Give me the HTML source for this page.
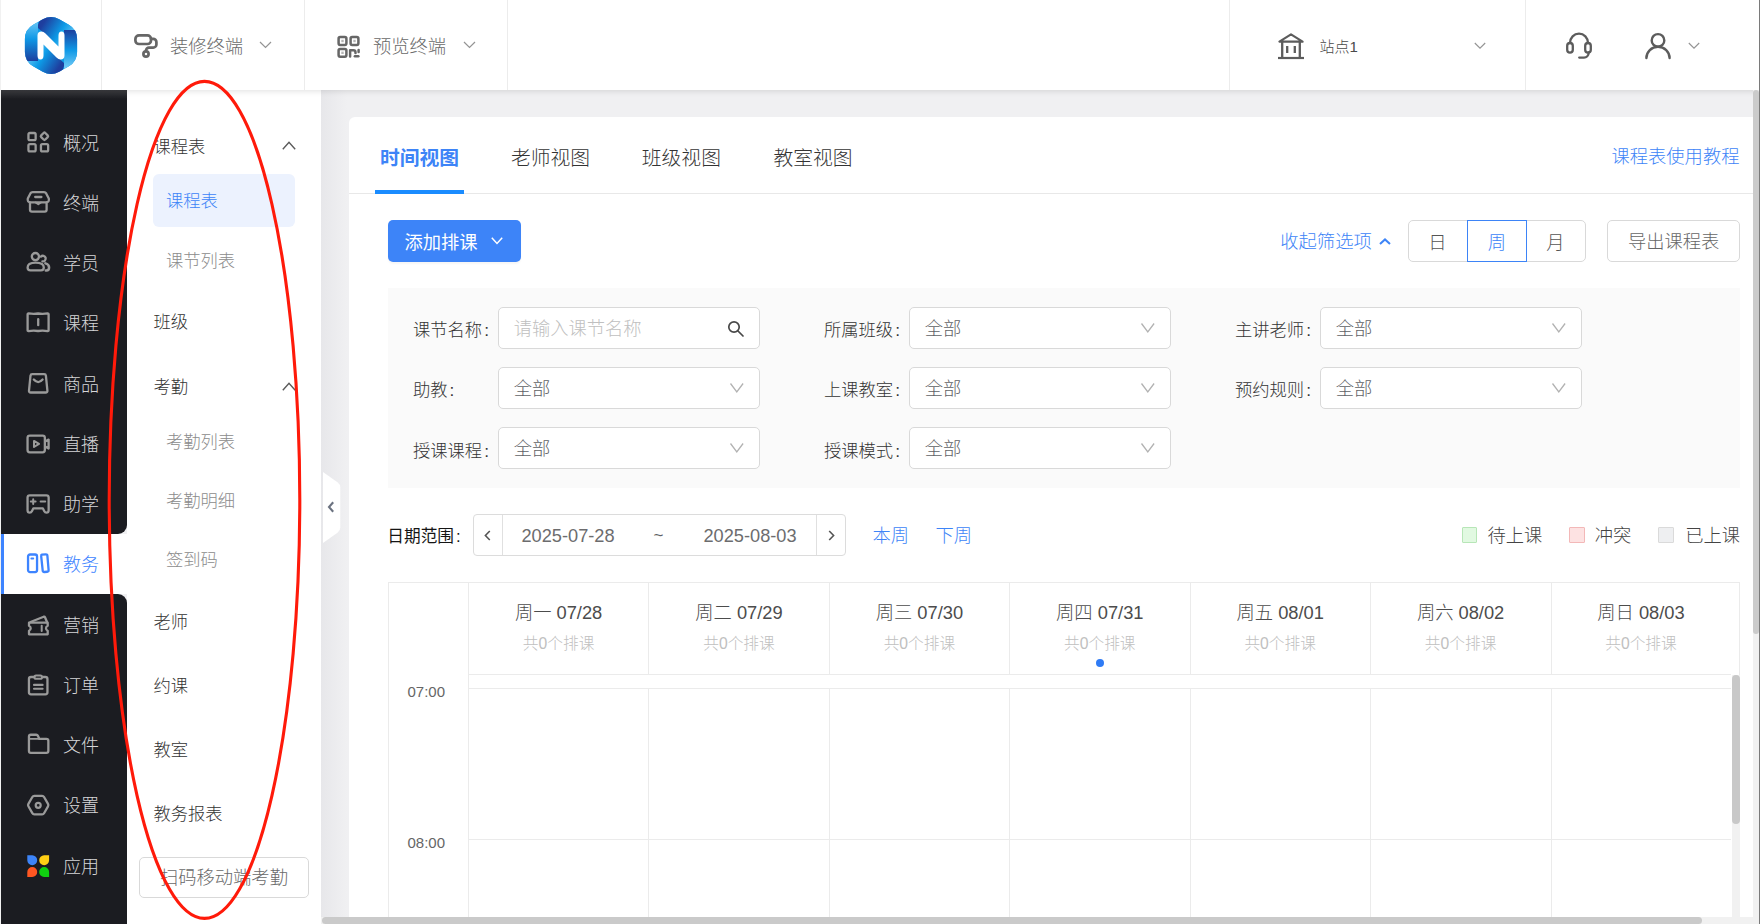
<!DOCTYPE html>
<html lang="zh-CN">
<head>
<meta charset="utf-8">
<title>课程表</title>
<style>
*{box-sizing:border-box;margin:0;padding:0}
html,body{width:1760px;height:924px;overflow:hidden;background:#f0f0f2}
body{font-family:"Liberation Sans","Noto Sans CJK SC",sans-serif;font-size:17.5px;font-weight:300;color:#333;position:relative}
.abs{position:absolute}
svg{display:block;overflow:visible}
/* header */
#hdr{position:absolute;left:0;top:0;width:1760px;height:90px;background:#fff;box-shadow:0 1px 6px rgba(0,0,0,.13);z-index:5}
#hdr .vl{position:absolute;top:0;width:1px;height:90px;background:#ececec}
#hdr .t{position:absolute;top:0;height:90px;line-height:94px;font-size:18.3px;color:#6a6a6a;white-space:nowrap}
/* dark nav */
#nav{position:absolute;left:1px;top:90px;width:126px;height:834px;z-index:2}
#nav .it{position:absolute;left:0;width:127px;height:60px;color:#d6d6d8;font-size:18px;line-height:60px;white-space:nowrap}
#nav .it span{position:absolute;left:62px;top:1px}
#nav .it svg{position:absolute;left:25px;top:18px}
/* sub nav */
#sub{position:absolute;left:127px;top:90px;width:194px;height:834px;background:#fff;z-index:1}
#sub .g{position:absolute;left:26.5px;font-size:17.3px;color:#333;line-height:24px;white-space:nowrap}
#sub .s{position:absolute;left:39px;font-size:17.3px;color:#8c8c8c;line-height:24px;white-space:nowrap}
/* main */
#main{position:absolute;left:321px;top:90px;width:1439px;height:834px;background:linear-gradient(90deg,#e7e7ea 0,#f0f0f2 26px)}
#card{position:absolute;left:349px;top:117px;width:1404px;height:800px;background:#fff;border-radius:6px 0 0 0}
.lbl{position:absolute;font-size:17.5px;color:#333;line-height:24px;white-space:nowrap}
.inp{position:absolute;width:262.2px;height:41.7px;border:1px solid #d9d9d9;border-radius:5px;background:#fff;font-size:18.3px;line-height:42px;padding-left:14.5px;color:#606266;white-space:nowrap}
.inp svg{position:absolute;right:15px;top:15px}
</style>
</head>
<body>
<div id="main"></div>
<div class="abs" style="left:0;top:0;width:1px;height:924px;background:#f1f1f1;z-index:20"></div><div class="abs" style="left:1759px;top:0;width:1px;height:924px;background:#7a7a7a;z-index:20"></div>
<div id="card"></div>
<div id="content">
<div class="abs" style="left:379.9px;top:144px;font-size:19.8px;line-height:28px;white-space:nowrap;color:#3d84f7;font-weight:bold">时间视图</div>
<div class="abs" style="left:510.9px;top:144px;font-size:19.8px;line-height:28px;white-space:nowrap;color:#333">老师视图</div>
<div class="abs" style="left:641.8px;top:144px;font-size:19.8px;line-height:28px;white-space:nowrap;color:#333">班级视图</div>
<div class="abs" style="left:773.4px;top:144px;font-size:19.8px;line-height:28px;white-space:nowrap;color:#333">教室视图</div>
<div class="abs" style="left:349px;top:193px;width:1404px;height:1px;background:#e8e8e8"></div>
<div class="abs" style="left:375px;top:190px;width:89px;height:3.8px;background:#1a8cff"></div>
<div class="abs" style="left:1611.5px;top:144px;font-size:18.3px;line-height:26px;color:#3d84f7;white-space:nowrap">课程表使用教程</div>
<div class="abs" style="left:388.3px;top:220px;width:132.6px;height:41.7px;background:#3d84f8;border-radius:5px;box-shadow:0 2px 2px rgba(0,0,0,.04)"></div>
<div class="abs" style="left:404.5px;top:230px;font-size:18.3px;font-weight:400;line-height:26px;color:#fff;white-space:nowrap">添加排课</div>
<svg class="abs" style="left:491px;top:237px" width="12" height="8" viewBox="0 0 12 8" fill="none" stroke="#fff" stroke-width="1.5"><path d="M0.8 0.8 L6 6.4 L11.2 0.8"/></svg>
<div class="abs" style="left:1280.3px;top:229px;font-size:18.3px;line-height:26px;color:#3d84f7;white-space:nowrap">收起筛选项</div>
<svg class="abs" style="left:1379px;top:237.5px" width="12" height="7" viewBox="0 0 12 7" fill="none" stroke="#3d84f7" stroke-width="2"><path d="M1 6 L6 1.400 L11 6"/></svg>
<div class="abs" style="left:1408.3px;top:220px;width:177.6px;height:41.6px;border:1px solid #d9d9d9;border-radius:5px;background:#fff"></div>
<div class="abs" style="left:1467px;top:220px;width:60px;height:41.6px;border:1.3px solid #3d84f7;background:#fff"></div>
<div class="abs" style="left:1417.5px;width:40px;text-align:center;top:229.5px;font-size:18.3px;line-height:26px;color:#555">日</div>
<div class="abs" style="left:1477px;width:40px;text-align:center;top:229.5px;font-size:18.3px;line-height:26px;color:#3d84f7">周</div>
<div class="abs" style="left:1535.5px;width:40px;text-align:center;top:229.5px;font-size:18.3px;line-height:26px;color:#555">月</div>
<div class="abs" style="left:1607.2px;top:220px;width:133px;height:41.6px;border:1px solid #d9d9d9;border-radius:5px;background:#fff;text-align:center;font-size:18.3px;line-height:42px;color:#666">导出课程表</div>
<div class="abs" style="left:388px;top:287.7px;width:1351.6px;height:200px;background:#fafafa"></div>
<div class="lbl" style="left:413px;top:318.3px;font-size:17.3px">课节名称<span style="margin-left:2px">:</span></div>
<div class="inp" style="left:498.2px;top:307.0px;color:#c0c0c0">请输入课节名称</div>
<svg class="abs" style="left:727.2px;top:319.5px" width="18" height="18" viewBox="0 0 18 18" fill="none" stroke="#484848" stroke-width="1.7" stroke-linecap="round"><circle cx="7" cy="7" r="5.2"/><path d="M11 11 L16 16"/></svg>
<div class="lbl" style="left:824px;top:318.3px;font-size:17.3px">所属班级<span style="margin-left:2px">:</span></div>
<div class="inp" style="left:909.2px;top:307.0px">全部</div>
<svg class="abs" style="left:1141.0px;top:322.8px" width="14" height="10" viewBox="0 0 14 10" fill="none" stroke="#b2b2b2" stroke-width="1.3"><path d="M0.5 0.5 L6.800 9 L13.100 0.500"/></svg>
<div class="lbl" style="left:1235px;top:318.3px;font-size:17.3px">主讲老师<span style="margin-left:2px">:</span></div>
<div class="inp" style="left:1320.2px;top:307.0px">全部</div>
<svg class="abs" style="left:1552.0px;top:322.8px" width="14" height="10" viewBox="0 0 14 10" fill="none" stroke="#b2b2b2" stroke-width="1.3"><path d="M0.5 0.5 L6.800 9 L13.100 0.500"/></svg>
<div class="lbl" style="left:413px;top:378.4px;font-size:17.3px">助教<span style="margin-left:2px">:</span></div>
<div class="inp" style="left:498.2px;top:367.1px">全部</div>
<svg class="abs" style="left:730.0px;top:382.9px" width="14" height="10" viewBox="0 0 14 10" fill="none" stroke="#b2b2b2" stroke-width="1.3"><path d="M0.5 0.5 L6.800 9 L13.100 0.500"/></svg>
<div class="lbl" style="left:824px;top:378.4px;font-size:17.3px">上课教室<span style="margin-left:2px">:</span></div>
<div class="inp" style="left:909.2px;top:367.1px">全部</div>
<svg class="abs" style="left:1141.0px;top:382.9px" width="14" height="10" viewBox="0 0 14 10" fill="none" stroke="#b2b2b2" stroke-width="1.3"><path d="M0.5 0.5 L6.800 9 L13.100 0.500"/></svg>
<div class="lbl" style="left:1235px;top:378.4px;font-size:17.3px">预约规则<span style="margin-left:2px">:</span></div>
<div class="inp" style="left:1320.2px;top:367.1px">全部</div>
<svg class="abs" style="left:1552.0px;top:382.9px" width="14" height="10" viewBox="0 0 14 10" fill="none" stroke="#b2b2b2" stroke-width="1.3"><path d="M0.5 0.5 L6.800 9 L13.100 0.500"/></svg>
<div class="lbl" style="left:413px;top:438.5px;font-size:17.3px">授课课程<span style="margin-left:2px">:</span></div>
<div class="inp" style="left:498.2px;top:427.2px">全部</div>
<svg class="abs" style="left:730.0px;top:443.0px" width="14" height="10" viewBox="0 0 14 10" fill="none" stroke="#b2b2b2" stroke-width="1.3"><path d="M0.5 0.5 L6.800 9 L13.100 0.500"/></svg>
<div class="lbl" style="left:824px;top:438.5px;font-size:17.3px">授课模式<span style="margin-left:2px">:</span></div>
<div class="inp" style="left:909.2px;top:427.2px">全部</div>
<svg class="abs" style="left:1141.0px;top:443.0px" width="14" height="10" viewBox="0 0 14 10" fill="none" stroke="#b2b2b2" stroke-width="1.3"><path d="M0.5 0.5 L6.800 9 L13.100 0.500"/></svg>
<div class="abs" style="left:387.3px;top:524px;font-size:16.7px;font-weight:400;line-height:26px;color:#151515;white-space:nowrap">日期范围<span style="margin-left:2px">:</span></div>
<div class="abs" style="left:473px;top:514px;width:373px;height:41.5px;border:1px solid #dcdcdc;border-radius:4px;background:#fff"></div>
<div class="abs" style="left:502.4px;top:515px;width:1px;height:40px;background:#e0e0e0"></div><div class="abs" style="left:816.2px;top:515px;width:1px;height:40px;background:#e0e0e0"></div>
<svg class="abs" style="left:484px;top:529.5px" width="7" height="11" viewBox="0 0 7 11" fill="none" stroke="#555" stroke-width="1.6"><path d="M5.8 1 L1.400 5.500 L5.800 10"/></svg>
<svg class="abs" style="left:827.5px;top:529.5px" width="7" height="11" viewBox="0 0 7 11" fill="none" stroke="#555" stroke-width="1.6"><path d="M1.2 1 L5.600 5.500 L1.200 10"/></svg>
<div class="abs" style="left:521.5px;top:522.5px;font-size:18.2px;line-height:26px;color:#6c6c6e;white-space:nowrap">2025-07-28</div>
<div class="abs" style="left:653.5px;top:522.500px;font-size:17px;line-height:26px;color:#606266">~</div>
<div class="abs" style="left:703.5px;top:522.5px;font-size:18.2px;line-height:26px;color:#6c6c6e;white-space:nowrap">2025-08-03</div>
<div class="abs" style="left:872.5px;top:522.5px;font-size:18.3px;line-height:26px;color:#3d84f7;white-space:nowrap">本周</div>
<div class="abs" style="left:935.5px;top:522.5px;font-size:18.3px;line-height:26px;color:#3d84f7;white-space:nowrap">下周</div>
<div class="abs" style="left:1462.4px;top:527px;width:15px;height:16px;background:#e1f9e1;border:1px solid #b7e6b7;border-radius:1px"></div>
<div class="abs" style="left:1487.5px;top:522.500px;font-size:18.3px;line-height:26px;color:#444;white-space:nowrap">待上课</div>
<div class="abs" style="left:1569.2px;top:527px;width:16px;height:16px;background:#fde2e2;border:1px solid #f3b8b8;border-radius:1px"></div>
<div class="abs" style="left:1594.8px;top:522.500px;font-size:18.3px;line-height:26px;color:#444;white-space:nowrap">冲突</div>
<div class="abs" style="left:1658.4px;top:527px;width:16px;height:16px;background:#eeeff1;border:1px solid #dadada;border-radius:1px"></div>
<div class="abs" style="left:1685.2px;top:522.500px;font-size:18.3px;line-height:26px;color:#444;white-space:nowrap">已上课</div>
<div class="abs" style="left:388.4px;top:582.3px;width:1351.6px;height:335px;border:1px solid #ebebeb;border-bottom:0;background:#fff"></div>
<div class="abs" style="left:468px;top:583px;width:1px;height:334px;background:#ebebeb"></div>

<div class="abs" style="left:478.6px;width:160px;text-align:center;top:599.5px;font-size:18.3px;line-height:26px;color:#4c4c4c;white-space:nowrap">周一 07/28</div>
<div class="abs" style="left:478.6px;width:160px;text-align:center;top:633px;font-size:15.7px;line-height:22px;color:#c0c0c0;white-space:nowrap">共0个排课</div>
<div class="abs" style="left:648px;top:583px;width:1px;height:91px;background:#ebebeb"></div>
<div class="abs" style="left:648px;top:688px;width:1px;height:229px;background:#ebebeb"></div>
<div class="abs" style="left:659.0px;width:160px;text-align:center;top:599.5px;font-size:18.3px;line-height:26px;color:#4c4c4c;white-space:nowrap">周二 07/29</div>
<div class="abs" style="left:659.0px;width:160px;text-align:center;top:633px;font-size:15.7px;line-height:22px;color:#c0c0c0;white-space:nowrap">共0个排课</div>
<div class="abs" style="left:829px;top:583px;width:1px;height:91px;background:#ebebeb"></div>
<div class="abs" style="left:829px;top:688px;width:1px;height:229px;background:#ebebeb"></div>
<div class="abs" style="left:839.4px;width:160px;text-align:center;top:599.5px;font-size:18.3px;line-height:26px;color:#4c4c4c;white-space:nowrap">周三 07/30</div>
<div class="abs" style="left:839.4px;width:160px;text-align:center;top:633px;font-size:15.7px;line-height:22px;color:#c0c0c0;white-space:nowrap">共0个排课</div>
<div class="abs" style="left:1009px;top:583px;width:1px;height:91px;background:#ebebeb"></div>
<div class="abs" style="left:1009px;top:688px;width:1px;height:229px;background:#ebebeb"></div>
<div class="abs" style="left:1019.8px;width:160px;text-align:center;top:599.5px;font-size:18.3px;line-height:26px;color:#4c4c4c;white-space:nowrap">周四 07/31</div>
<div class="abs" style="left:1019.8px;width:160px;text-align:center;top:633px;font-size:15.7px;line-height:22px;color:#c0c0c0;white-space:nowrap">共0个排课</div>
<div class="abs" style="left:1190px;top:583px;width:1px;height:91px;background:#ebebeb"></div>
<div class="abs" style="left:1190px;top:688px;width:1px;height:229px;background:#ebebeb"></div>
<div class="abs" style="left:1200.2px;width:160px;text-align:center;top:599.5px;font-size:18.3px;line-height:26px;color:#4c4c4c;white-space:nowrap">周五 08/01</div>
<div class="abs" style="left:1200.2px;width:160px;text-align:center;top:633px;font-size:15.7px;line-height:22px;color:#c0c0c0;white-space:nowrap">共0个排课</div>
<div class="abs" style="left:1370px;top:583px;width:1px;height:91px;background:#ebebeb"></div>
<div class="abs" style="left:1370px;top:688px;width:1px;height:229px;background:#ebebeb"></div>
<div class="abs" style="left:1380.6px;width:160px;text-align:center;top:599.5px;font-size:18.3px;line-height:26px;color:#4c4c4c;white-space:nowrap">周六 08/02</div>
<div class="abs" style="left:1380.6px;width:160px;text-align:center;top:633px;font-size:15.7px;line-height:22px;color:#c0c0c0;white-space:nowrap">共0个排课</div>
<div class="abs" style="left:1551px;top:583px;width:1px;height:91px;background:#ebebeb"></div>
<div class="abs" style="left:1551px;top:688px;width:1px;height:229px;background:#ebebeb"></div>
<div class="abs" style="left:1561.0px;width:160px;text-align:center;top:599.5px;font-size:18.3px;line-height:26px;color:#4c4c4c;white-space:nowrap">周日 08/03</div>
<div class="abs" style="left:1561.0px;width:160px;text-align:center;top:633px;font-size:15.7px;line-height:22px;color:#c0c0c0;white-space:nowrap">共0个排课</div>
<div class="abs" style="left:468.4px;top:674px;width:1263px;height:1px;background:#ebebeb"></div>
<div class="abs" style="left:468.4px;top:688px;width:1263px;height:1px;background:#ebebeb"></div>
<div class="abs" style="left:468.4px;top:839.2px;width:1263px;height:1px;background:#ebebeb"></div>
<div class="abs" style="left:1095.8px;top:658.800px;width:8px;height:8px;border-radius:50%;background:#2f7bf5"></div>
<div class="abs" style="left:407.5px;top:681px;font-size:15px;line-height:22px;color:#666;white-space:nowrap">07:00</div>
<div class="abs" style="left:407.5px;top:832px;font-size:15px;line-height:22px;color:#666;white-space:nowrap">08:00</div>
<div class="abs" style="left:1732px;top:675px;width:7.5px;height:242px;background:#f1f1f1"></div>
<div class="abs" style="left:1732px;top:675px;width:7.5px;height:149px;background:#c8c8c8;border-radius:4px"></div>
<div class="abs" style="left:1753px;top:90px;width:6px;height:834px;background:#f1f1f1;z-index:6"></div>
<div class="abs" style="left:1753px;top:90px;width:6px;height:544px;background:#cbcbcb;border-radius:3px;z-index:6"></div>
<div class="abs" style="left:321px;top:917px;width:1432px;height:7px;background:#f1f1f1;z-index:6"></div>
<div class="abs" style="left:322px;top:917px;width:1380px;height:7px;background:#cacaca;border-radius:4px;z-index:6"></div>
<svg class="abs" style="left:322.5px;top:472px;z-index:3" width="18" height="71" viewBox="0 0 18 71"><path d="M0 0 L14.5 10.200 Q17.3 12.200 17.300 15.500 V55.500 Q17.300 58.800 14.500 60.800 L0 71 Z" fill="#fff"/><path d="M10.2 30.200 L6 35 L10.200 39.800" fill="none" stroke="#6b7280" stroke-width="2.100"/></svg>
<svg class="abs" style="left:0;top:0;z-index:10;pointer-events:none" width="1760" height="924" viewBox="0 0 1760 924"><ellipse cx="204.5" cy="499.9" rx="95.3" ry="418.5" fill="none" stroke="#ff1a0a" stroke-width="3.1"/></svg>
</div>
<div id="sub">
<div class="g" style="top:45px">课程表</div>
<svg class="abs" style="left:154.5px;top:50.6px" width="14" height="9" viewBox="0 0 14 9" fill="none" stroke="#5a5a5a" stroke-width="1.4"><path d="M0.8 8.2 L7 1.4 L13.200 8.2"/></svg>
<div class="abs" style="left:25.7px;top:83.9px;width:142.6px;height:52.8px;background:#ecf2fe;border-radius:6px"></div>
<div class="s" style="top:99px;color:#3d84f7">课程表</div>
<div class="s" style="top:159px">课节列表</div>
<div class="g" style="top:220px">班级</div>
<div class="g" style="top:285px">考勤</div>
<svg class="abs" style="left:154.5px;top:291.7px" width="14" height="9" viewBox="0 0 14 9" fill="none" stroke="#5a5a5a" stroke-width="1.4"><path d="M0.8 8.2 L7 1.4 L13.200 8.2"/></svg>
<div class="s" style="top:340px">考勤列表</div>
<div class="s" style="top:399px">考勤明细</div>
<div class="s" style="top:458px">签到码</div>
<div class="g" style="top:520px">老师</div>
<div class="g" style="top:584px">约课</div>
<div class="g" style="top:648px">教室</div>
<div class="g" style="top:712px">教务报表</div>
<div class="abs" style="left:12.2px;top:766.5px;width:169.5px;height:41px;border:1px solid #d9d9d9;border-radius:5px;text-align:center;line-height:40.500px;font-size:18.3px;color:#6a6a6a;white-space:nowrap">扫码移动端考勤</div>
</div>
<div id="nav">
<div class="abs" style="left:0;top:444px;width:126px;height:60px;background:#fff"></div>
<div class="abs" style="left:0;top:0;width:126px;height:444px;background:linear-gradient(180deg,#3b3c40 0,#1b1c21 9px);border-radius:0 0 9px 0"></div>
<div class="abs" style="left:0;top:504px;width:126px;height:330px;background:#1b1c21;border-radius:0 9px 0 0"></div>
<div class="abs" style="left:0;top:444px;width:3px;height:60px;background:#3d84ff"></div>
<div class="it" style="top:22.50px"><svg width="24" height="24" viewBox="0 0 24 24"><g fill="none" stroke="#9a9a9a" stroke-width="2.3"><rect x="2.45" y="2" width="7.2" height="7.2" rx="1.4"/><rect x="2.45" y="13.1" width="7.2" height="7.2" rx="1.4"/><rect x="14.95" y="13.1" width="7.2" height="7.2" rx="1.4"/><rect x="15.55" y="2.350" width="5.8" height="5.8" rx="1.200" transform="rotate(45 18.45 5.25)"/></g></svg><span>概况</span></div>
<div class="it" style="top:82.75px"><svg width="24" height="24" viewBox="0 0 24 24"><g fill="none" stroke="#9a9a9a" stroke-width="2.3" stroke-linejoin="round" stroke-linecap="round"><path d="M6.6 1.1 H18 Q19.5 1.1 20.2 2.4 L22.8 7.6 Q23.6 11.3 20 11.3 H4.600 Q1 11.3 1.800 7.600 L4.400 2.400 Q5.100 1.100 6.600 1.100Z"/><path d="M4 11.6 V18.8 Q4 20.700 5.900 20.700 H18.700 Q20.600 20.700 20.600 18.800 V11.600"/><path d="M9.2 6 H15.4"/><path d="M9.6 11.5 L12.300 13.300 L15 11.500" stroke-width="1.8"/></g></svg><span>终端</span></div>
<div class="it" style="top:143.00px"><svg width="24" height="24" viewBox="0 0 24 24"><g fill="none" stroke="#9a9a9a" stroke-width="2.3" stroke-linejoin="round" stroke-linecap="round"><circle cx="9.4" cy="5.6" r="3.600"/><path d="M1.600 16.600 Q1.600 11.700 9.600 11.700 Q17.800 11.700 17.800 16.600 Q17.800 19.400 15 19.400 H4.400 Q1.600 19.400 1.600 16.600Z"/><path d="M14.900 5.600 A2.800 2.800 0 1 1 16.400 10.300"/><path d="M19.400 12.400 Q23.100 13.400 23.100 16.400 Q23.100 19.400 20.400 19.400 H19.800" stroke-width="2.500"/></g></svg><span>学员</span></div>
<div class="it" style="top:203.25px"><svg width="24" height="24" viewBox="0 0 24 24"><g fill="none" stroke="#9a9a9a" stroke-width="2.3" stroke-linejoin="round" stroke-linecap="round"><path d="M1.600 3.200 Q1.600 2.300 2.600 2.400 Q7.300 3.300 12.100 2.500 Q16.900 3.300 21.600 2.400 Q22.600 2.300 22.600 3.200 V19.300 Q22.600 20.200 21.600 20.100 Q16.900 19.200 12.100 20 Q7.300 19.200 2.600 20.100 Q1.600 20.200 1.600 19.300Z"/><path d="M12.200 8.200 V14.200"/></g></svg><span>课程</span></div>
<div class="it" style="top:263.50px"><svg width="24" height="24" viewBox="0 0 24 24"><g fill="none" stroke="#9a9a9a" stroke-width="2.3" stroke-linejoin="round" stroke-linecap="round"><path d="M6.200 2.100 H18.200 Q19.700 2.100 19.900 3.600 L21.400 18.600 Q21.600 20.500 19.700 20.500 H4.700 Q2.800 20.500 3 18.600 L4.500 3.600 Q4.700 2.100 6.200 2.100Z"/><path d="M7.800 7.500 Q12.200 12.600 16.600 7.500"/></g></svg><span>商品</span></div>
<div class="it" style="top:323.75px"><svg width="24" height="24" viewBox="0 0 24 24"><g fill="none" stroke="#9a9a9a" stroke-width="2.3" stroke-linejoin="round" stroke-linecap="round"><rect x="1.550" y="3.600" width="17.300" height="16.700" rx="2.200"/><path d="M19.200 9.600 L22.600 7.600 V16.600 L19.200 14.600"/><path d="M8 8.900 L13 11.950 L8 15 Z" stroke-width="2"/></g></svg><span>直播</span></div>
<div class="it" style="top:384.00px"><svg width="24" height="24" viewBox="0 0 24 24"><g fill="none" stroke="#9a9a9a" stroke-width="2.3" stroke-linejoin="round" stroke-linecap="round"><path d="M3.800 3.350 H20.400 Q22.650 3.350 22.650 5.600 V18.300 Q22.650 20.650 20.400 20.650 Q19 20.650 18.300 19.300 L16.800 16.300 H7.400 L5.900 19.300 Q5.200 20.650 3.800 20.650 Q1.550 20.650 1.550 18.300 V5.600 Q1.550 3.350 3.800 3.350Z"/><path d="M4.800 9.600 H9.600 M7.200 7.200 V12 M14.600 9.600 H19.200" stroke-width="2"/></g></svg><span>助学</span></div>
<div class="it" style="top:444.25px;color:#3d84ff"><svg width="24" height="24" viewBox="0 0 24 24"><g fill="none" stroke="#3d84ff" stroke-width="2.3" stroke-linejoin="round" stroke-linecap="round"><rect x="2.050" y="2.500" width="9" height="17.600" rx="2"/><path d="M5.400 6.500 h1.800" stroke-width="2"/><path d="M15.800 2.700 L19.800 2.400 Q21.300 2.300 21.400 3.800 L22.600 18.100 Q22.700 19.600 21.200 19.750 L18.300 20 Q16.800 20.100 16.700 18.600 L15.200 4.300 Q15.050 2.800 15.800 2.700Z"/></g></svg><span>教务</span></div>
<div class="it" style="top:504.50px"><svg width="24" height="24" viewBox="0 0 24 24"><g fill="none" stroke="#9a9a9a" stroke-width="2.3" stroke-linejoin="round" stroke-linecap="round"><path d="M3 9.700 H21.700 V12.800 Q20 13.500 20 15.300 Q20 17.100 21.700 17.800 V21.300 H3 V17.800 Q4.700 17.100 4.700 15.300 Q4.700 13.500 3 12.800Z"/><path d="M4.500 9 L17.700 3.700 Q18.600 3.400 19 4.300 L21 9"/><path d="M15.700 12.800 V18" stroke-width="2"/></g></svg><span>营销</span></div>
<div class="it" style="top:564.75px"><svg width="24" height="24" viewBox="0 0 24 24"><g fill="none" stroke="#9a9a9a" stroke-width="2.3" stroke-linejoin="round" stroke-linecap="round"><path d="M8.400 4 H5 Q2.950 4 2.950 6 V19.300 Q2.950 21.300 5 21.300 H19.400 Q21.450 21.300 21.450 19.300 V6 Q21.450 4 19.400 4 H16"/><rect x="8.400" y="2.500" width="7.600" height="3.300" rx="1.650" stroke-width="2"/><path d="M8 11.900 H16.600 M8 15.800 H16.600" stroke-width="2.100"/></g></svg><span>订单</span></div>
<div class="it" style="top:625.00px"><svg width="24" height="24" viewBox="0 0 24 24"><g fill="none" stroke="#9a9a9a" stroke-width="2.3" stroke-linejoin="round" stroke-linecap="round"><path d="M2.950 3.600 Q2.950 1.750 4.800 1.750 H10.200 Q11.400 1.750 12 2.900 L13.400 5.900 H20.400 Q22.350 5.900 22.350 7.800 V18 Q22.350 19.850 20.400 19.850 H4.800 Q2.950 19.850 2.950 18Z"/><path d="M3.500 5.900 H13.400" stroke-width="1.800"/></g></svg><span>文件</span></div>
<div class="it" style="top:685.25px"><svg width="24" height="24" viewBox="0 0 24 24"><g fill="none" stroke="#9a9a9a" stroke-width="2.3" stroke-linejoin="round" stroke-linecap="round"><path d="M8.300 2.900 H16.100 Q17.400 2.900 18.050 4 L22 10.900 Q22.700 12.100 22 13.300 L18.050 20.200 Q17.400 21.300 16.100 21.300 H8.300 Q7 21.300 6.350 20.200 L2.400 13.300 Q1.700 12.100 2.400 10.900 L6.350 4 Q7 2.900 8.300 2.900Z"/><circle cx="12.200" cy="12.300" r="2.500" stroke-width="2.200"/></g></svg><span>设置</span></div>
<div class="it" style="top:745.50px"><svg width="24" height="24" viewBox="0 0 24 24"><g stroke="none"><path d="M1.300 1.300 H6.300 A4.950 4.950 0 1 1 1.300 6.300Z" fill="#3d84f8"/><path d="M23.100 1.300 H18.100 A4.950 4.950 0 1 0 23.100 6.300Z" fill="#ffce14"/><path d="M1.300 22.900 H6.300 A4.950 4.950 0 1 0 1.300 17.900Z" fill="#ff5722"/><path d="M23.100 22.900 H18.100 A4.950 4.950 0 1 1 23.100 17.900Z" fill="#10d010"/></g></svg><span>应用</span></div>
</div>
<div id="hdr">
<div class="vl" style="left:101px"></div><div class="vl" style="left:304px"></div><div class="vl" style="left:507px"></div><div class="vl" style="left:1229px"></div><div class="vl" style="left:1525px"></div>
<svg class="abs" style="left:25.2px;top:17.3px" width="52" height="57" viewBox="0 0 52 57">
<defs>
<clipPath id="hx"><path d="M17.76 2.33 Q26.00 -2.40 34.24 2.33 L43.86 7.87 Q52.10 12.60 52.10 22.10 L52.10 34.90 Q52.10 44.40 43.86 49.13 L34.24 54.67 Q26.00 59.40 17.76 54.67 L8.14 49.13 Q-0.10 44.40 -0.10 34.90 L-0.10 22.10 Q-0.10 12.60 8.14 7.87Z"/></clipPath>
<linearGradient id="lgL" x1="0" y1="0" x2="0" y2="1"><stop offset="0" stop-color="#6cc8f6"/><stop offset=".45" stop-color="#0f98e6"/><stop offset="1" stop-color="#1c3f9f"/></linearGradient>
<linearGradient id="lgR" x1="0" y1="0" x2="0" y2="1"><stop offset="0" stop-color="#1c3f9f"/><stop offset=".5" stop-color="#0f98e6"/><stop offset="1" stop-color="#7dd0f8"/></linearGradient>
<linearGradient id="lgT" x1="0" y1="0" x2="1" y2="0.6"><stop offset="0" stop-color="#1e3a9a"/><stop offset=".2" stop-color="#1e3f9f"/><stop offset=".6" stop-color="#0d9be7"/><stop offset="1" stop-color="#8ad6fa"/></linearGradient>
<linearGradient id="lgB" x1="0" y1="0.4" x2="1" y2="1"><stop offset="0" stop-color="#8ad6fa"/><stop offset=".4" stop-color="#0d9be7"/><stop offset=".8" stop-color="#1e3f9f"/><stop offset="1" stop-color="#1e3a9a"/></linearGradient>
</defs>
<g clip-path="url(#hx)">
<rect x="-2" y="-4" width="56" height="65" fill="#0d9be7"/>
<path d="M13 8 Q16 -6 30 -2 L54 12 L54 22 L41 15 L41 36 L13 11Z" fill="url(#lgT)"/>
<path d="M39 49 Q36 63 22 59 L-2 45 L-2 35 L11 42 L11 21 L39 46Z" fill="url(#lgB)"/>
<path d="M-2 10 L13 4 L13 44 L-2 44Z" fill="url(#lgL)"/>
<path d="M54 47 L39 53 L39 13 L54 13Z" fill="url(#lgR)"/>
</g>
<path d="M12.5 40 L12.500 18.5 Q12.5 14.500 16.5 14.500 Q18.5 14.500 20.5 16.500 L33.500 29.500 L33.500 18.500 Q33.5 14.500 36.5 14.500 Q39.500 14.500 39.500 18.500 L39.500 38.500 Q39.500 42.500 35.500 42.500 Q33.500 42.500 31.500 40.500 L18.500 27.500 L18.500 38.500 Q18.500 42.500 15.500 42.500 Q12.500 42.500 12.500 38.500Z" fill="#fff"/>
</svg>
<!-- paint roller -->
<svg class="abs" style="left:132px;top:32px" width="28" height="28" viewBox="0 0 28 28" fill="none" stroke="#666" stroke-width="2.7" stroke-linecap="round" stroke-linejoin="round">
<rect x="3.4" y="3.4" width="15.6" height="8.6" rx="3.6"/>
<path d="M19 6.8 h2.2 a3.2 3.2 0 0 1 3.2 3.2 v2.4 a3.2 3.2 0 0 1 -3.2 3.2 h-4.2 a3 3 0 0 0 -3 3 v0.6"/>
<circle cx="14" cy="22" r="2.6"/>
</svg>
<div class="t" style="left:170px">装修终端</div>
<svg class="abs" style="left:259px;top:41px" width="13" height="8" viewBox="0 0 13 8" fill="none" stroke="#949494" stroke-width="1.2"><path d="M1 1 L6.5 6.500 L12 1"/></svg>
<!-- qr -->
<svg class="abs" style="left:336px;top:34px" width="26" height="26" viewBox="0 0 26 26" fill="none" stroke="#666" stroke-width="2.5" stroke-linejoin="round" stroke-linecap="round">
<rect x="2.6" y="3.1" width="7.8" height="7.8" rx="1.6"/><rect x="14.6" y="3.1" width="7.8" height="7.8" rx="1.6"/><rect x="2.6" y="14.9" width="7.8" height="7.8" rx="1.6"/>
<path d="M14.1 22.400 V16.300 H17.400 Q19.500 16.300 19.500 18.400 V19"/><path d="M22.600 15.900 V17.900"/><path d="M18.850 22.300 H22.300"/>
<g stroke="none" fill="#b5b5b5"><rect x="5.3" y="5.8" width="2.4" height="2.4"/><rect x="17.3" y="5.8" width="2.4" height="2.4"/><rect x="5.3" y="17.6" width="2.4" height="2.4"/></g>
</svg>
<div class="t" style="left:373px">预览终端</div>
<svg class="abs" style="left:462.5px;top:41px" width="13" height="8" viewBox="0 0 13 8" fill="none" stroke="#949494" stroke-width="1.2"><path d="M1 1 L6.5 6.500 L12 1"/></svg>
<!-- bank -->
<svg class="abs" style="left:1277px;top:32px" width="28" height="28" viewBox="0 0 28 28" fill="none" stroke="#5c5c5c" stroke-width="2.3" stroke-linejoin="round" stroke-linecap="butt">
<path d="M2.4 9.6 L14 2.4 L25.6 9.6 Z" stroke-width="2.2"/>
<path d="M5.2 10 V25.6 M22.8 10 V25.6"/>
<path d="M10.2 14 V21 M17.8 14 V21"/>
<path d="M1 26 H27" stroke-width="2.2"/>
</svg>
<div class="t" style="left:1319.5px;font-size:15px;color:#4a4a4a">站点1</div>
<svg class="abs" style="left:1474px;top:41.5px" width="12" height="8" viewBox="0 0 12 8" fill="none" stroke="#949494" stroke-width="1.150"><path d="M0.8 1 L6 6.200 L11.200 1"/></svg>
<!-- headset -->
<svg class="abs" style="left:1565px;top:32px" width="28" height="28" viewBox="0 0 28 28" fill="none" stroke="#5c5c5c" stroke-width="2.3" stroke-linecap="round" stroke-linejoin="round">
<path d="M5 11 a9 9.4 0 0 1 18 0"/>
<rect x="2.2" y="11" width="5.6" height="9.6" rx="2.8"/><rect x="20.2" y="11" width="5.6" height="9.6" rx="2.8"/>
<path d="M23.6 20.4 v0.6 a4.6 4.6 0 0 1 -4.6 4.6 h-4.8"/>
</svg>
<!-- user -->
<svg class="abs" style="left:1644px;top:32px" width="28" height="28" viewBox="0 0 28 28" fill="none" stroke="#5c5c5c" stroke-width="2.4" stroke-linecap="round">
<circle cx="14" cy="8.4" r="6.3"/><path d="M2.4 26 a11.6 11.2 0 0 1 23.2 0"/>
</svg>
<svg class="abs" style="left:1687.5px;top:41.5px" width="12" height="8" viewBox="0 0 12 8" fill="none" stroke="#949494" stroke-width="1.150"><path d="M0.8 1 L6 6.200 L11.200 1"/></svg>
</div>
</body>
</html>
